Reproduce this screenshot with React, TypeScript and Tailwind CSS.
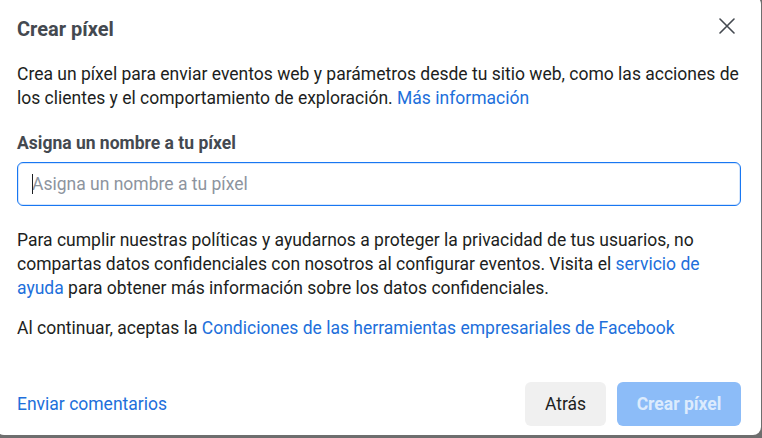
const font = { fontFamily: "Roboto, 'Noto Sans', sans-serif" };

function CloseIcon() {
  return (
    <svg width="16" height="16" viewBox="0 0 16 16" fill="none" stroke="currentColor" strokeWidth="1.6" strokeLinecap="round">
      <path d="M1 1L15 15M15 1L1 15" />
    </svg>
  );
}

export default function App() {
  return (
    <div
      className="relative h-[438px] w-[762px] overflow-hidden bg-[#6e6e6e]"
      style={font}
    >
      {/* modal */}
      <div className="ml-[-4px] mt-[-4px] flex h-[439px] w-[765px] flex-col rounded-lg bg-white pl-[21px] pr-[20px] text-[17.5px] text-[#1c1e21]">
        {/* header */}
        <div className="flex h-[66px] items-center justify-between">
          <h1 className="text-[20px] font-bold text-[#444950]">Crear píxel</h1>
          <button type="button" className="mr-[6px] mt-[-7px] text-[#444950]" aria-label="Cerrar">
            <CloseIcon />
          </button>
        </div>

        <p className="leading-6">
          Crea un píxel para enviar eventos web y parámetros desde tu sitio web, como las acciones de
          los clientes y el comportamiento de exploración.{" "}
          <a className="text-[#216fdb]">Más información</a>
        </p>

        <label className="mt-[21px] block font-bold leading-6 text-[#444950]">
          Asigna un nombre a tu píxel
        </label>

        <div className="relative mt-[7px]">
          <input
            type="text"
            placeholder="Asigna un nombre a tu píxel"
            className="h-[44px] w-full rounded-md border border-[#1877f2] px-[14px] text-[17.5px] text-[#1c1e21] shadow-[inset_0_0_0_1px_#d6e6fb] outline-none placeholder:text-[#8d949e]"
          />
          <span className="absolute left-[15px] top-[12px] h-[20px] w-px bg-[#1c1e21]" />
        </div>

        <p className="mt-[22px] leading-6">
          Para cumplir nuestras políticas y ayudarnos a proteger la privacidad de tus usuarios, no
          compartas datos confidenciales con nosotros al configurar eventos. Visita el{" "}
          <a className="text-[#216fdb]">servicio de ayuda</a> para obtener más información sobre los
          datos confidenciales.
        </p>

        <p className="mt-[16px] leading-6">
          Al continuar, aceptas la{" "}
          <a className="text-[#216fdb]">Condiciones de las herramientas empresariales de Facebook</a>
        </p>

        {/* footer */}
        <div className="mt-auto flex items-center justify-between pb-[9px]">
          <a className="text-[#216fdb]">Enviar comentarios</a>
          <div className="flex gap-[11px]">
            <button
              type="button"
              className="h-[44px] w-[81px] rounded-md bg-[#f0f0f0] text-[#1c1e21]"
            >
              Atrás
            </button>
            <button
              type="button"
              className="h-[44px] w-[124px] rounded-md bg-[#8cbcf8] font-bold text-[#dcebfd]"
            >
              Crear píxel
            </button>
          </div>
        </div>
      </div>
    </div>
  );
}
